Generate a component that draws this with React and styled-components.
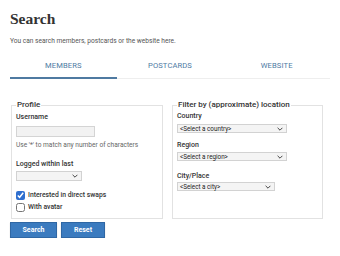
import React from 'react'
import styled, { createGlobalStyle } from 'styled-components'

const Global = createGlobalStyle`
body{
  margin:0;
  background:#fff;
  font-family: Roboto, "Liberation Sans", sans-serif;
  color:#333;
}
`;

const Page = styled.div`
padding: 9px 10px 0;
`;

const Title = styled.h1`
margin:0;
font-family: "Liberation Serif", serif;
font-size:15.5px;
line-height:20px;
font-weight:700;
color:#333;
`;

const Intro = styled.p`
margin:7px 0 0;
font-size:6.6px;
line-height:10px;
color:#555;
`;

const Tabs = styled.div`
display:grid;
grid-template-columns: repeat(3, 1fr);
border-bottom:1px solid #eee;
`;

const Tab = styled.div`
text-align:center;
padding:15px 0 6px;
font-size:7.6px;
line-height:10px;
color:#4e7aa3;
letter-spacing:0.1px;
border-bottom:2px solid ${p => p.active ? '#4f7aa1' : 'transparent'};
margin-bottom:-1px;
`;

const Columns = styled.div`
display:grid;
grid-template-columns: 152px 151px;
column-gap:9px;
margin:21px 0 0 1px;
`;

const Fieldset = styled.fieldset`
margin:0;
padding:0 4px 6px;
border:1px solid #e2e2e2;
min-width:0;
`;

const Legend = styled.legend`
padding:0 1px;
font-size:8px;
line-height:10px;
font-weight:500;
color:#333;
`;

const Label = styled.div`
margin-top:${p => p.gap}px;
font-size:7px;
line-height:9px;
font-weight:500;
color:#333;
`;

const TextInput = styled.input`
display:block;
box-sizing:border-box;
margin-top:4px;
width:79px;
height:11px;
padding:0 2px;
border:1px solid #d4d4d4;
background:#f2f2f2;
font-size:6px;
`;

const Hint = styled.div`
margin-top:4px;
font-size:6.6px;
line-height:9px;
color:#666;
`;

const Select = styled.div`
box-sizing:border-box;
display:flex;
align-items:center;
justify-content:space-between;
margin-top:${p => p.gap}px;
width:${p => p.w}px;
height:${p => p.h}px;
padding:0 3px 0 2px;
border:1px solid #d2d2d2;
background:#f4f4f4;
font-size:6.3px;
line-height:8px;
color:#222;
`;

const Chevron = () => (
  <svg width="6" height="4" viewBox="0 0 6 4">
    <path d="M0.6 0.8 L3 3.2 L5.4 0.8" fill="none" stroke="#333" strokeWidth="0.9" />
  </svg>
);

const CheckRow = styled.label`
display:flex;
align-items:center;
gap:3px;
margin-top:${p => p.gap}px;
height:10px;
font-size:6.8px;
font-weight:500;
color:#333;
`;

const Check = styled.input`
margin:0;
width:9px;
height:9px;
accent-color:#2f6fcf;
`;

const Buttons = styled.div`
display:flex;
gap:4px;
margin-top:3px;
`;

const Button = styled.button`
box-sizing:border-box;
width:${p => p.w}px;
height:16px;
padding:0;
border:1px solid #2f67a4;
background:#3b7bbf;
color:#fff;
font-family: Roboto, "Liberation Sans", sans-serif;
font-size:7px;
font-weight:700;
box-shadow:0 1px 1px rgba(0,0,0,0.2);
`;

export default function App() {
  return (
    <Page>
      <Global />
      <Title>Search</Title>
      <Intro>You can search members, postcards or the website here.</Intro>
      <Tabs>
        <Tab active>MEMBERS</Tab>
        <Tab>POSTCARDS</Tab>
        <Tab>WEBSITE</Tab>
      </Tabs>
      <Columns>
        <Fieldset>
          <Legend>Profile</Legend>
          <Label gap={3}>Username</Label>
          <TextInput />
          <Hint>Use '*' to match any number of characters</Hint>
          <Label gap={10}>Logged within last</Label>
          <Select gap={2} w={66} h={10}><span></span><Chevron /></Select>
          <CheckRow gap={9}><Check type="checkbox" defaultChecked />Interested in direct swaps</CheckRow>
          <CheckRow gap={2}><Check type="checkbox" />With avatar</CheckRow>
        </Fieldset>
        <Fieldset>
          <Legend>Filter by (approximate) location</Legend>
          <Label gap={2}>Country</Label>
          <Select gap={3} w={110} h={9}><span>&lt;Select a country&gt;</span><Chevron /></Select>
          <Label gap={8}>Region</Label>
          <Select gap={2} w={110} h={9}><span>&lt;Select a region&gt;</span><Chevron /></Select>
          <Label gap={11}>City/Place</Label>
          <Select gap={1} w={98} h={9}><span>&lt;Select a city&gt;</span><Chevron /></Select>
        </Fieldset>
      </Columns>
      <Buttons>
        <Button w={47}>Search</Button>
        <Button w={44}>Reset</Button>
      </Buttons>
    </Page>
  )
}
